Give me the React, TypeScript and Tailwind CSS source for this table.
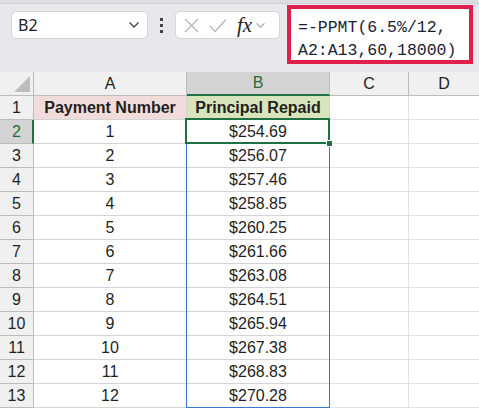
import React from "react";

const rows = [
  ["1", "$254.69"],
  ["2", "$256.07"],
  ["3", "$257.46"],
  ["4", "$258.85"],
  ["5", "$260.25"],
  ["6", "$261.66"],
  ["7", "$263.08"],
  ["8", "$264.51"],
  ["9", "$265.94"],
  ["10", "$267.38"],
  ["11", "$268.83"],
  ["12", "$270.28"],
];

function Chevron() {
  return (
    <svg width="12" height="8" viewBox="0 0 12 8" fill="none">
      <path d="M1.5 1.5 L6 6 L10.5 1.5" stroke="#444" strokeWidth="1.3" />
    </svg>
  );
}

export default function App() {
  return (
    <div className="w-[479px] h-[412px] overflow-hidden bg-white font-['Liberation_Sans',sans-serif] text-[#1f1f1f]">
      {/* toolbar */}
      <div className="h-[72px] bg-[#e8e8ec] relative">
        <div className="h-[4px] bg-[#dedee2] border-b border-[#d2d2d6]" />
        <div className="flex items-start pl-[11px] pt-[7px]">
          <div className="w-[137px] h-[28px] bg-white rounded-[5px] border border-[#d6d6d6] flex items-center justify-between pl-[6px] pr-[7px]">
            <span className="font-['Noto_Sans',sans-serif] text-[16px] leading-none text-[#222]">B2</span>
            <Chevron />
          </div>
          <div className="w-[27px] h-[28px] flex flex-col items-center justify-center gap-[3px]">
            <span className="w-[3px] h-[3px] bg-[#444]" />
            <span className="w-[3px] h-[3px] bg-[#444]" />
            <span className="w-[3px] h-[3px] bg-[#444]" />
          </div>
          <div className="w-[105px] h-[28px] bg-white rounded-[5px] border border-[#d6d6d6] flex items-center pl-[8px] gap-[10px]">
            <svg width="15" height="15" viewBox="0 0 15 15">
              <path d="M1 1 L14 14 M14 1 L1 14" stroke="#b4b4b4" strokeWidth="1.2" />
            </svg>
            <svg width="18" height="15" viewBox="0 0 18 15">
              <path d="M1 8 L6 13.5 L17 1.5" stroke="#b4b4b4" strokeWidth="1.2" fill="none" />
            </svg>
            <span className="flex items-center gap-[3px]">
              <span className="font-['Liberation_Serif',serif] italic text-[21px] leading-none text-[#222]">
                fx
              </span>
              <svg width="11" height="7" viewBox="0 0 12 8" fill="none">
                <path d="M1.5 1.5 L6 6 L10.5 1.5" stroke="#999" strokeWidth="1.2" />
              </svg>
            </span>
          </div>
          <div className="ml-[7px] -mt-[6px] w-[186px] h-[59px] border-[4px] border-[#e01f4b] bg-white pl-[7px] pt-[7px] font-['Liberation_Mono',monospace] text-[16.5px] leading-[23px] text-[#1a2333] whitespace-pre">
            {"=-PPMT(6.5%/12,\nA2:A13,60,18000)"}
          </div>
        </div>
      </div>

      {/* grid */}
      <div className="relative">
        {/* column headers */}
        <div className="flex h-[24px] bg-[#f0f0f0] text-[16px]">
          <div className="w-[34px] border-r border-b border-[#bcbcbc] relative">
            <svg className="absolute right-[3px] bottom-[3px]" width="16" height="16" viewBox="0 0 16 16">
              <path d="M16 0 L16 16 L0 16 Z" fill="#bdbdbd" />
            </svg>
          </div>
          <div className="w-[153px] border-r border-b border-[#bcbcbc] flex items-center justify-center">A</div>
          <div className="w-[143px] border-r border-[#bcbcbc] border-b-2 border-b-[#1e7145] bg-[#d3d3d3] flex items-center justify-center text-[#1e6b3e]">
            B
          </div>
          <div className="w-[79px] border-r border-b border-[#bcbcbc] flex items-center justify-center">C</div>
          <div className="flex-1 border-b border-[#bcbcbc] flex items-center justify-center">D</div>
        </div>

        {/* row 1 */}
        <div className="flex h-[24px] text-[16px]">
          <div className="w-[34px] bg-[#f0f0f0] border-r border-b border-[#bcbcbc] flex items-center justify-center">1</div>
          <div className="w-[153px] bg-[#f2dcdb] border-r border-b border-[#d4d4d4] flex items-center justify-center font-bold">
            Payment Number
          </div>
          <div className="w-[143px] bg-[#d8e4bc] border-r border-b border-[#d4d4d4] flex items-center justify-center font-bold">
            Principal Repaid
          </div>
          <div className="w-[79px] border-r border-b border-[#e2e2e2]" />
          <div className="flex-1 border-b border-[#e2e2e2]" />
        </div>

        {rows.map(([n, v], i) => (
          <div key={n} className="flex h-[24px] text-[16px]">
            <div
              className={
                i === 0
                  ? "w-[34px] bg-[#d3d3d3] text-[#1e6b3e] border-r-2 border-r-[#1e7145] border-b border-[#bcbcbc] flex items-center justify-center pl-[1px]"
                  : "w-[34px] bg-[#f0f0f0] border-r border-b border-[#bcbcbc] flex items-center justify-center"
              }
            >
              {i + 2}
            </div>
            <div className="w-[153px] border-r border-b border-[#d4d4d4] flex items-center justify-center">{n}</div>
            <div className="w-[143px] border-r border-b border-[#d4d4d4] flex items-center justify-center">{v}</div>
            <div className="w-[79px] border-r border-b border-[#e2e2e2]" />
            <div className="flex-1 border-b border-[#e2e2e2]" />
          </div>
        ))}

        {/* blue range highlight */}
        <div className="absolute left-[186px] top-[47px] w-[144px] h-[289px] border border-[#3a74d6] pointer-events-none" />
        {/* active cell */}
        <div className="absolute left-[185px] top-[46px] w-[145px] h-[26px] border-2 border-[#1e7145] pointer-events-none" />
        <div className="absolute left-[326px] top-[68px] w-[7px] h-[7px] bg-[#1e7145] border border-white pointer-events-none" />
      </div>
    </div>
  );
}
